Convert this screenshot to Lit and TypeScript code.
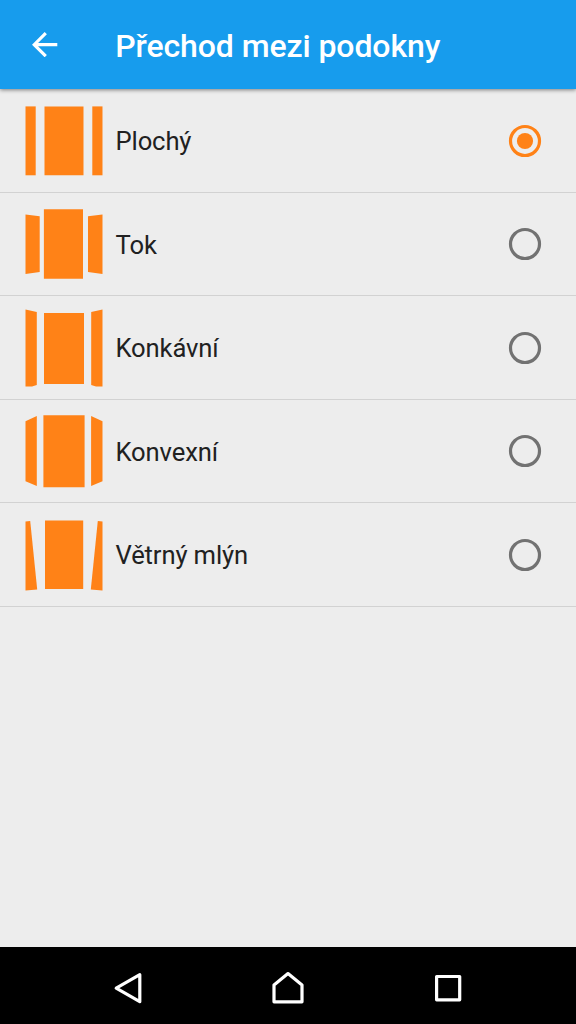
import { LitElement, html, css, svg } from "lit";
import { customElement, property, state } from "lit/decorators.js";

interface Transition {
  name: string;
  shapes: string[];
}

const TRANSITIONS: Transition[] = [
  {
    name: "Plochý",
    shapes: [
      "1.5,16.4 11.7,16.4 11.7,85.3 1.5,85.3",
      "20.5,16.4 59.5,16.4 59.5,85.3 20.5,85.3",
      "68.3,16.4 78.5,16.4 78.5,85.3 68.3,85.3",
    ],
  },
  {
    name: "Tok",
    shapes: [
      "1.5,21.4 15.7,23.2 15.7,79.1 1.5,80.9",
      "19.9,16.2 59,16.2 59,85.8 19.9,85.8",
      "64,23.2 78.5,21.4 78.5,80.9 64,79.1",
    ],
  },
  {
    name: "Konkávní",
    shapes: [
      "1.5,12.4 12.8,15 12.8,88 8,89.4 1.5,89.4",
      "20,15.9 60,15.9 60,87.1 20,87.1",
      "67.2,15 78.5,12.4 78.5,89.4 72,89.4 67.2,88",
    ],
  },
  {
    name: "Konvexní",
    shapes: [
      "1.5,21.2 12.8,16.1 12.8,86.1 1.5,81.3",
      "19.4,15.2 60.6,15.2 60.6,87.3 19.4,87.3",
      "67.1,16.1 78.5,21.2 78.5,81.3 67.1,86.1",
    ],
  },
  {
    name: "Větrný mlýn",
    shapes: [
      "1.5,18.5 6.2,18.1 13.2,86.4 1.5,87.5",
      "21,17.5 59.2,17.5 59.2,85.9 21,85.9",
      "73.8,18.1 78.5,18.5 78.5,87.5 66.8,86.4",
    ],
  },
];

@customElement("transition-row")
export class TransitionRow extends LitElement {
  @property({ attribute: false }) item!: Transition;
  @property({ type: Boolean }) selected = false;

  static styles = css`
    :host {
      display: flex;
      align-items: center;
      box-sizing: border-box;
      height: 103.467px;
      padding: 0 35.2px 0 24px;
      border-bottom: 1px solid #d2d2d2;
      cursor: pointer;
    }
    .preview {
      flex: none;
      width: 80px;
      height: 102.4px;
      fill: #ff8217;
    }
    .name {
      flex: 1;
      margin: 1px 0 0 11.5px;
      font-size: 25.6px;
      line-height: 30px;
      letter-spacing: -0.12px;
      color: #212121;
    }
    .radio {
      flex: none;
      width: 32px;
      height: 32px;
      overflow: visible;
    }
    .ring {
      fill: none;
      stroke: #727272;
      stroke-width: 3.2;
    }
    .on {
      stroke: #ff8217;
    }
    .dot {
      fill: #ff8217;
    }
  `;

  render() {
    return html`
      <svg class="preview" viewBox="0 0 80 102.4">
        ${this.item.shapes.map((points) => svg`<polygon points=${points}></polygon>`)}
      </svg>
      <span class="name">${this.item.name}</span>
      <svg class="radio" viewBox="0 0 32 32">
        <circle class="ring ${this.selected ? "on" : ""}" cx="16" cy="16" r="14.5"></circle>
        ${this.selected ? svg`<circle class="dot" cx="16" cy="16" r="8.1"></circle>` : ""}
      </svg>
    `;
  }
}

@customElement("app-root")
export class AppRoot extends LitElement {
  @state() private selected = 0;

  static styles = css`
    :host {
      display: flex;
      flex-direction: column;
      height: 100vh;
      overflow: hidden;
      background: #ededed;
      font-family: Roboto, "Noto Sans", sans-serif;
    }
    .bar {
      flex: none;
      display: flex;
      align-items: center;
      box-sizing: border-box;
      height: 89.4px;
      padding-left: 32.4px;
      background: #179ced;
      color: #fff;
      box-shadow: 0 1px 4px rgba(0, 0, 0, 0.48);
      z-index: 1;
    }
    .back {
      width: 25.3px;
      height: 25.3px;
      fill: #fff;
    }
    .title {
      margin: 2px 0 0 57.5px;
      font-size: 32px;
      line-height: 38px;
      font-weight: 500;
      letter-spacing: -0.09px;
    }
    .list {
      flex: 1;
      padding-top: 0.2px;
    }
    .nav {
      flex: none;
      display: flex;
      justify-content: center;
      align-items: center;
      box-sizing: border-box;
      height: 76.8px;
      padding-top: 4px;
      background: #000;
    }
    .key {
      width: 160px;
      height: 40px;
      fill: none;
      stroke: #fff;
      stroke-width: 3.2;
      stroke-linejoin: round;
    }
  `;

  render() {
    return html`
      <header class="bar">
        <svg class="back" viewBox="4 4 16 16">
          <path d="M20 11H7.83l5.59-5.59L12 4l-8 8 8 8 1.41-1.41L7.83 13H20v-2z"></path>
        </svg>
        <h1 class="title">Přechod mezi podokny</h1>
      </header>
      <main class="list">
        ${TRANSITIONS.map(
          (item, i) => html`<transition-row
            .item=${item}
            ?selected=${i === this.selected}
            @click=${() => (this.selected = i)}
          ></transition-row>`
        )}
      </main>
      <nav class="nav">
        <svg class="key" viewBox="0 0 160 40">
          <path d="M68.2 20.2 91.8 6.7V33.7Z"></path>
        </svg>
        <svg class="key" viewBox="0 0 160 40">
          <path d="M66 33.8V17L80 5.6 94 17V33.8Z"></path>
        </svg>
        <svg class="key" viewBox="0 0 160 40">
          <path d="M68.6 8.5H91.7V31.8H68.6Z"></path>
        </svg>
      </nav>
    `;
  }
}
